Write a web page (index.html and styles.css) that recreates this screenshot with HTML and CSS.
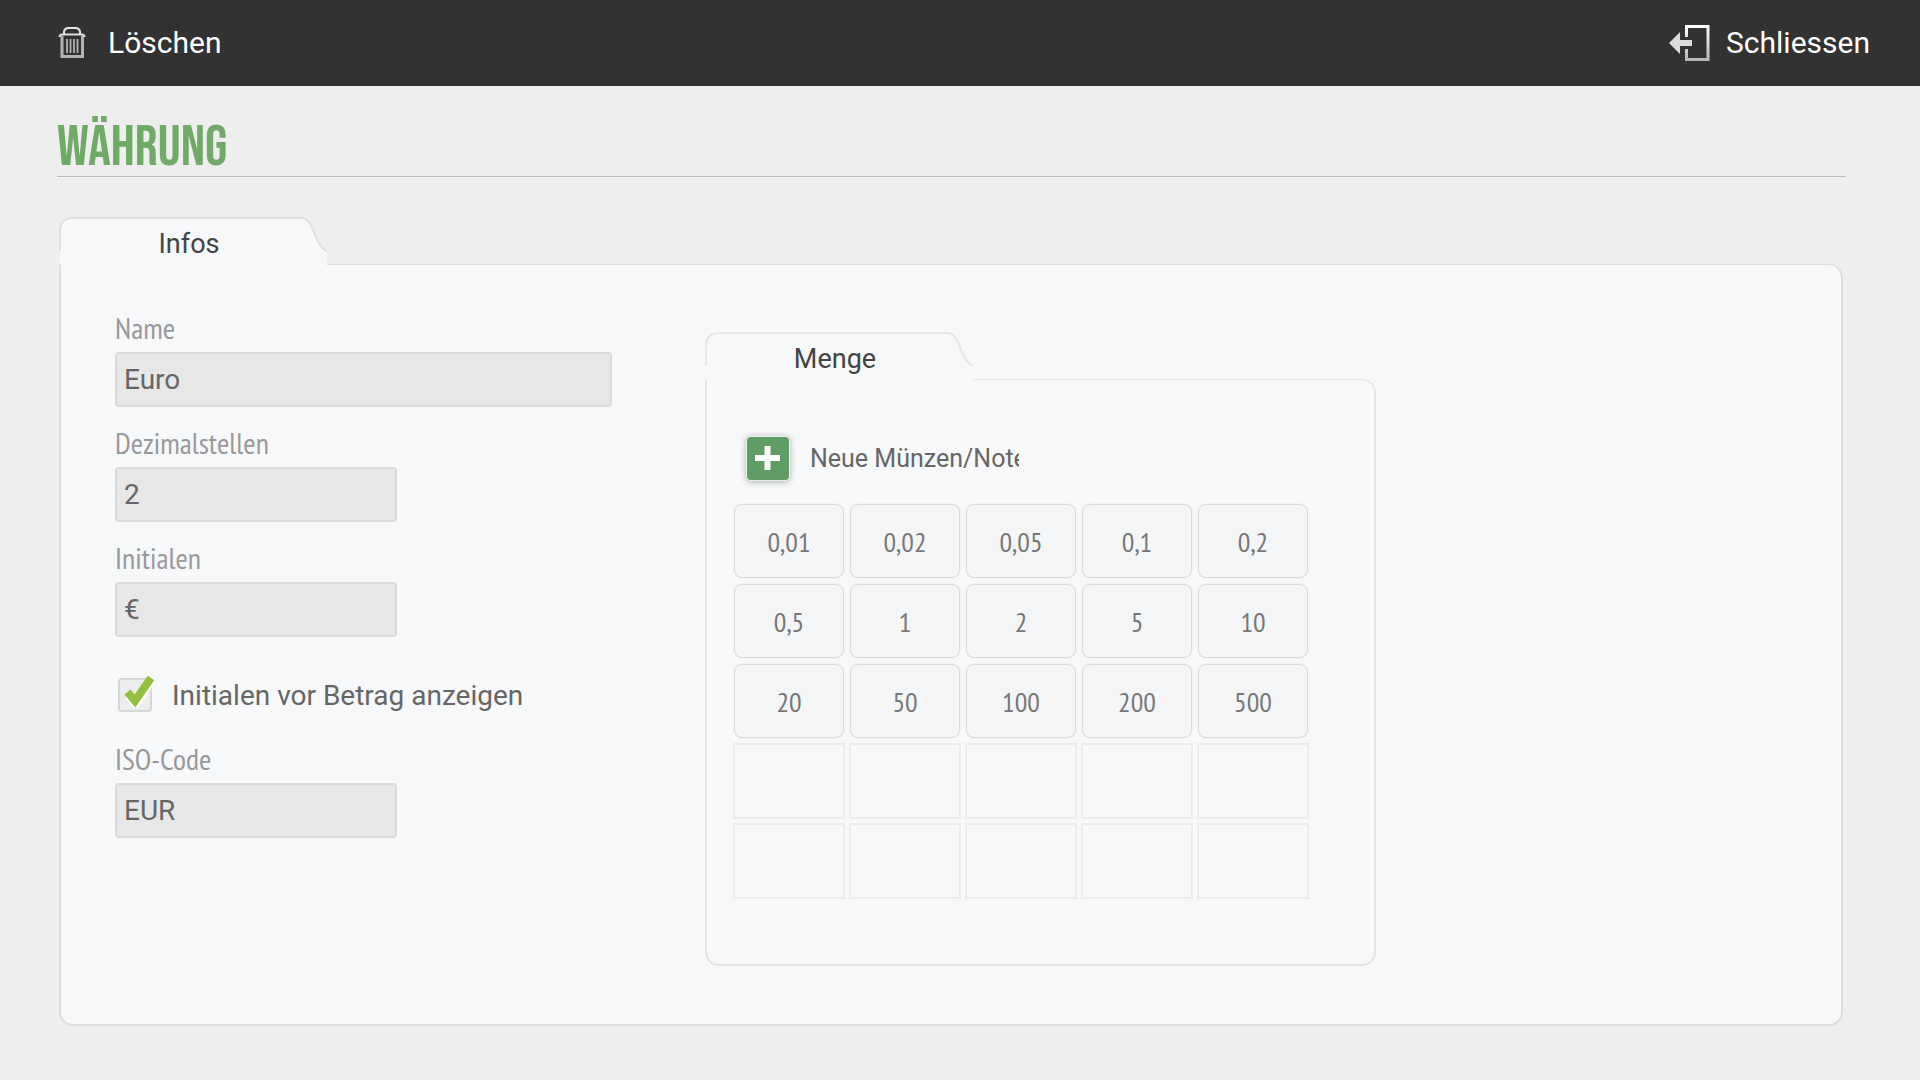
FILE: index.html
```html
<!DOCTYPE html>
<html lang="de">

<head>
    <meta charset="UTF-8">
    <meta name="viewport" content="width=device-width, initial-scale=1.0">
    <title>Währung</title>
    <link rel="stylesheet" href="styles.css">
</head>

<body>
    <header class="toolbar">
        <button type="button" class="toolbar-button">
            <svg class="icon-trash" width="28" height="34" viewBox="0 -1 28 34" fill="none" stroke="#b4b4b4">
                <path d="M6 8V6.500Q6 2 10.500 2H17.500Q22 2 22 6.500V8" stroke="#e8e8e8" stroke-width="2" />
                <path d="M1.500 11Q1.500 8.500 4 8.500H24Q26.500 8.500 26.500 11" stroke="#dedede" stroke-width="2" />
                <path d="M4 10V30.500H24.500V10" stroke-width="3" />
                <path d="M9 13V27M12.500 13V27M16 13V27M19.500 13V27" stroke-width="1.800" />
            </svg>
            <span>Löschen</span>
        </button>
        <button type="button" class="toolbar-button">
            <svg width="41" height="38" viewBox="0 -1 41 38">
                <defs>
                    <linearGradient id="metal" x1="0" y1="0" x2="0" y2="1">
                        <stop offset="0" stop-color="#ffffff" />
                        <stop offset="1" stop-color="#b4b4b4" />
                    </linearGradient>
                </defs>
                <path d="M16 13V1H40.500V37H16V25H19V34H37.500V4H19V13Z" fill="url(#metal)" />
                <path d="M0 19L11 8V16H23V22H11V30Z" fill="#dcdcdc" />
            </svg>
            <span>Schliessen</span>
        </button>
    </header>

    <main>
        <h1>WÄHRUNG</h1>

        <div class="tab-box tab-box-main">
            <h2 class="tab">
                <svg class="tab-shape" width="268" height="48" viewBox="0 0 268 48">
                    <path d="M1 48V14Q1 1 14 1H242C256 1 254 28 268 34V48Z" fill="#f7f8fa" />
                    <path d="M1 34V14Q1 1 14 1H242C256 1 254 28 268 34" fill="none" stroke="#dfe0e0" stroke-width="2" />
                </svg>
                <span>Infos</span>
            </h2>
            <section class="panel infos">
                <form class="fields">
                    <div class="field">
                        <label for="name">Name</label>
                        <input type="text" id="name" class="wide" value="Euro">
                    </div>
                    <div class="field">
                        <label for="decimals">Dezimalstellen</label>
                        <input type="text" id="decimals" value="2">
                    </div>
                    <div class="field">
                        <label for="initials">Initialen</label>
                        <input type="text" id="initials" value="€">
                    </div>
                    <label class="check">
                        <input type="checkbox" checked>
                        <svg class="tick" width="36" height="36" viewBox="0 0 36 36" fill="none">
                            <path d="M8 20L15 28L30 5" stroke="#ffffff" stroke-width="10" stroke-linejoin="round" />
                            <path d="M6.500 17L14 26L30 3" stroke="#94c13d" stroke-width="8" />
                        </svg>
                        <span>Initialen vor Betrag anzeigen</span>
                    </label>
                    <div class="field">
                        <label for="iso">ISO-Code</label>
                        <input type="text" id="iso" value="EUR">
                    </div>
                </form>

                <div class="tab-box tab-box-amounts">
                    <h2 class="tab">
                        <svg class="tab-shape" width="268" height="48" viewBox="0 0 268 48">
                            <path d="M1 48V14Q1 1 14 1H242C256 1 254 28 268 34V48Z" fill="#f7f8fa" />
                            <path d="M1 34V14Q1 1 14 1H242C256 1 254 28 268 34" fill="none" stroke="#e5e7e7" stroke-width="2" />
                        </svg>
                        <span>Menge</span>
                    </h2>
                    <section class="panel amounts">
                        <button type="button" class="add">
                            <svg class="add-icon" width="42" height="43" viewBox="0 0 42 43">
                                <path d="M8 21H33M20.500 9V33" stroke="#ffffff" stroke-width="6" />
                            </svg>
                            <span class="add-text">Neue Münzen/Noten</span>
                        </button>
                        <div class="grid">
                            <button type="button" class="coin">0,01</button>
                            <button type="button" class="coin">0,02</button>
                            <button type="button" class="coin">0,05</button>
                            <button type="button" class="coin">0,1</button>
                            <button type="button" class="coin">0,2</button>
                            <button type="button" class="coin">0,5</button>
                            <button type="button" class="coin">1</button>
                            <button type="button" class="coin">2</button>
                            <button type="button" class="coin">5</button>
                            <button type="button" class="coin">10</button>
                            <button type="button" class="coin">20</button>
                            <button type="button" class="coin">50</button>
                            <button type="button" class="coin">100</button>
                            <button type="button" class="coin">200</button>
                            <button type="button" class="coin">500</button>
                            <div class="slot"></div>
                            <div class="slot"></div>
                            <div class="slot"></div>
                            <div class="slot"></div>
                            <div class="slot"></div>
                            <div class="slot"></div>
                            <div class="slot"></div>
                            <div class="slot"></div>
                            <div class="slot"></div>
                            <div class="slot"></div>
                        </div>
                    </section>
                </div>
            </section>
        </div>
    </main>
</body>

</html>
```

FILE: styles.css
```css
*, *::before, *::after {
    box-sizing: border-box;
}

:root {
    --bg: #eeeeee;
    --bar: #323232;
    --panel: #f7f8fa;
    --line: #dcdddd;
    --green: #70aa67;
    --label: #999999;
    --text: #666666;
    --narrow: "PT Sans Narrow", "Roboto Condensed", "Open Sans Condensed", Roboto, sans-serif;
}

body {
    display: flex;
    flex-direction: column;
    min-height: 100vh;
    margin: 0;
    background: var(--bg);
    color: var(--text);
    font-family: Roboto, sans-serif;
    font-size: 28px;
}

button {
    padding: 0;
    border: none;
    background: none;
    color: inherit;
    font-family: inherit;
    cursor: pointer;
}

.toolbar {
    display: flex;
    justify-content: space-between;
    height: 86px;
    padding: 0 50px 2px 58px;
    background: var(--bar);
}

.toolbar-button {
    display: flex;
    align-items: center;
    gap: 16px;
    color: #ffffff;
    font-size: 30px;
}

.icon-trash {
    margin-right: 6px;
}

main {
    flex: 1;
    display: flex;
    flex-direction: column;
    padding: 26px 74px 54px 57px;
}

h1 {
    margin: 0 0 40px;
    height: 65px;
    border-bottom: 1px solid #b9b9b9;
    color: var(--green);
    font-family: "Bebas Neue", "Open Sans Condensed", Roboto, sans-serif;
    font-size: 57px;
    font-weight: 400;
    line-height: 72px;
}

.tab-box {
    display: flex;
    flex-direction: column;
}

.tab-box-main {
    flex: 1;
    margin: 0 3px 0 2px;
}

.tab {
    position: relative;
    width: 268px;
    height: 48px;
    margin: 0 0 -1px;
    padding-right: 8px;
    color: #444444;
    font-size: 27px;
    font-weight: 400;
    line-height: 54px;
    text-align: center;
}

.tab-shape {
    position: absolute;
    top: 0;
    left: 0;
}

.tab span {
    position: relative;
}

.panel {
    border: 2px solid var(--line);
    border-top-width: 1px;
    border-radius: 0 14px 14px 14px;
    background: var(--panel);
}

.infos {
    flex: 1;
    display: flex;
    align-items: flex-start;
    gap: 93px;
    padding: 47px 54px 56px;
}

.fields {
    width: 497px;
}

.field {
    display: flex;
    flex-direction: column;
    align-items: flex-start;
    margin-bottom: 20px;
}

.field label {
    margin-bottom: 8px;
    color: var(--label);
    font-family: var(--narrow);
    font-size: 30px;
    line-height: 32px;
}

.field input {
    width: 282px;
    height: 55px;
    padding: 0 7px;
    border: 2px solid #d9dadb;
    border-radius: 4px;
    background: #e7e7e7;
    color: var(--text);
    font-family: inherit;
    font-size: 28px;
}

.field .wide {
    width: 100%;
}

.check {
    position: relative;
    display: flex;
    align-items: center;
    gap: 20px;
    height: 66px;
    margin-bottom: 20px;
    padding: 10px 0 0 3px;
}

.check input {
    appearance: none;
    width: 34px;
    height: 34px;
    margin: 0;
    border: 2px solid #d5d6d7;
    border-radius: 4px;
    background: #ededed;
}

.tick {
    position: absolute;
    top: 18px;
    left: 6px;
    display: none;
    pointer-events: none;
}

.check input:checked + .tick {
    display: block;
}

.tab-box-amounts {
    width: 671px;
    margin-top: 20px;
}

.amounts {
    padding: 53px 26px 65px;
    border-color: #e3e5e5;
}

.add {
    display: flex;
    align-items: center;
    gap: 21px;
    margin: 0 0 19px 14px;
    padding: 4px 0;
    font-size: 25px;
}

.add-icon {
    border-radius: 4px;
    background: #5f9c66;
    box-shadow: 0 0 0 1px #e9f1ea, 0 1px 6px 1px rgba(0, 0, 0, 0.3);
}

.add-text {
    width: 209px;
    overflow: hidden;
    text-align: left;
    white-space: nowrap;
}

.grid {
    display: grid;
    grid-template-columns: repeat(5, 112px);
    grid-auto-rows: 76px;
    gap: 4px;
}

.coin {
    margin: 1px;
    padding-top: 1px;
    border: 1px solid #d9dadb;
    border-radius: 8px;
    background: #f4f5f7;
    box-shadow: 0 0 0 1px #f1f2f3;
    color: #777777;
    font-family: var(--narrow);
    font-size: 28px;
}

.slot {
    border: 2px solid #ebecee;
}
```
